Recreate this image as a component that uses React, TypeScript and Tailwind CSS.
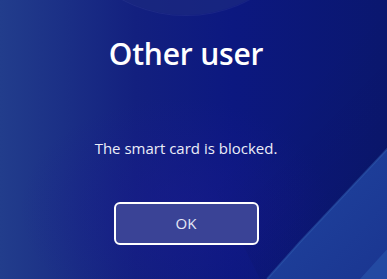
import React from "react";

function Wallpaper() {
  return (
    <svg className="absolute inset-0" width="387" height="279" viewBox="0 0 387 279">
      <defs>
        <linearGradient id="base" x1="0" y1="0" x2="1" y2="0">
          <stop offset="0" stopColor="#223d8c" />
          <stop offset="0.35" stopColor="#13207f" />
          <stop offset="0.6" stopColor="#0c1880" />
          <stop offset="1" stopColor="#0a176f" />
        </linearGradient>
        <linearGradient id="shade" x1="0" y1="0" x2="1" y2="1">
          <stop offset="0" stopColor="#000" stopOpacity="0" />
          <stop offset="0.5" stopColor="#000" stopOpacity="0" />
          <stop offset="1" stopColor="#000" stopOpacity="0.1" />
        </linearGradient>
        <linearGradient id="wave" x1="0" y1="0" x2="1" y2="1">
          <stop offset="0" stopColor="#2a55ad" />
          <stop offset="0.5" stopColor="#1d3d98" />
          <stop offset="1" stopColor="#1a3590" />
        </linearGradient>
        <radialGradient id="glow" cx="0.45" cy="0.75" r="0.4">
          <stop offset="0" stopColor="#1a1a90" stopOpacity="0.5" />
          <stop offset="1" stopColor="#1a1a90" stopOpacity="0" />
        </radialGradient>
      </defs>
      <rect width="387" height="279" fill="url(#base)" />
      <rect width="387" height="279" fill="url(#glow)" />
      <path d="M120 0 L260 279 L387 279 L387 0 Z" fill="url(#shade)" />
      <path d="M392 144 L300 242 L267 279 L387 279 Z" fill="url(#wave)" />
      <path d="M392 144 L300 242 L267 279" fill="none" stroke="#3461b4" strokeOpacity="0.45" strokeWidth="2" />
      <path d="M400 235 L360 279 L387 279 Z" fill="#2a56ad" fillOpacity="0.6" />
    </svg>
  );
}

export default function App() {
  return (
    <div
      className="relative w-[387px] h-[279px] overflow-hidden"
      style={{ fontFamily: "'Open Sans', 'Noto Sans', sans-serif" }}
    >
      <Wallpaper />
      <div className="relative flex flex-col items-center pr-[15px]">
        <div className="w-[270px] h-[270px] mt-[-255px] rounded-full bg-[#1a2880]/80 ring-1 ring-white/5" />
        <div className="mt-[21px] text-[30px] leading-[36px] font-semibold text-white tracking-[-0.2px]">
          Other user
        </div>
        <div className="mt-[66px] text-[15px] leading-[20px] text-[#eceef8]">
          The smart card is blocked.
        </div>
        <button className="mt-[44px] w-[145px] h-[43px] rounded-[6px] border-2 border-white bg-[#3a4396] text-[15px] text-[#e6e8f5]">
          OK
        </button>
      </div>
    </div>
  );
}
